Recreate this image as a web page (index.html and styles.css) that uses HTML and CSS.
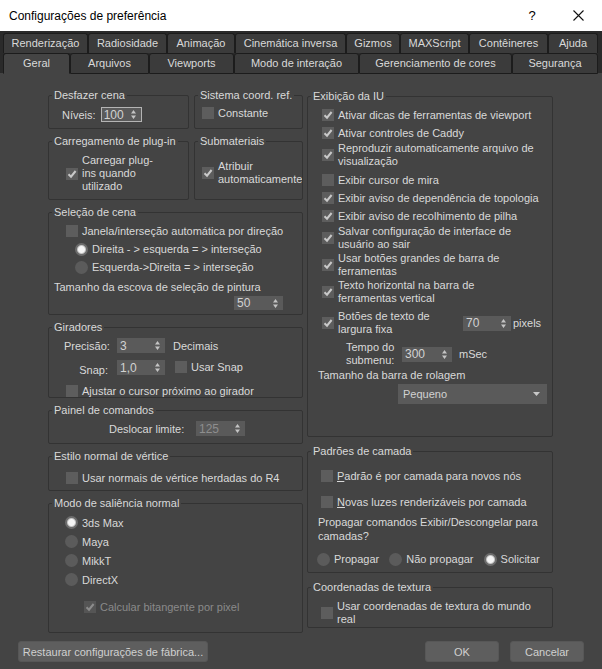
FILE: index.html
```html
<!DOCTYPE html>
<html lang="pt-BR">

<head>
    <meta charset="UTF-8">
    <meta name="viewport" content="width=device-width, initial-scale=1.0">
    <title>Configurações de preferência</title>

    <link rel="stylesheet" href="styles.css">
</head>

<body>
    <div class="dialog">
        <header class="titlebar">
            <span class="title">Configurações de preferência</span>
            <span class="title-help">?</span>
            <span class="title-close">
                <svg width="11" height="11" viewBox="0 0 11 11">
                    <path d="M0.5 0.5 L10.5 10.5 M10.5 0.5 L0.5 10.5" stroke="#111" stroke-width="1.1" fill="none" />
                </svg>
            </span>
        </header>

        <nav class="tabs">
            <div class="tab-row tab-row-back">
                <span class="tab">Renderização</span>
                <span class="tab">Radiosidade</span>
                <span class="tab">Animação</span>
                <span class="tab">Cinemática inversa</span>
                <span class="tab">Gizmos</span>
                <span class="tab">MAXScript</span>
                <span class="tab">Contêineres</span>
                <span class="tab">Ajuda</span>
            </div>
            <div class="tab-row tab-row-front">
                <span class="tab active">Geral</span>
                <span class="tab">Arquivos</span>
                <span class="tab">Viewports</span>
                <span class="tab">Modo de interação</span>
                <span class="tab">Gerenciamento de cores</span>
                <span class="tab">Segurança</span>
            </div>
        </nav>

        <main class="pane">
            <div class="col col-left">
                <div class="pair">
                    <fieldset class="group g-undo">
                        <legend>Desfazer cena</legend>
                        <div class="gbody">
                            <div class="row">
                                <span>Níveis:</span>
                                <span class="spin spin-focus w41">100
                                    <svg class="arrows" width="5" height="9" viewBox="0 0 5 9"><path d="M2.5 0 L5 3.5 H0Z M0 5.5 H5 L2.5 9Z" /></svg>
                                </span>
                            </div>
                        </div>
                    </fieldset>
                    <fieldset class="group g-ref">
                        <legend>Sistema coord. ref.</legend>
                        <div class="gbody">
                            <div class="row">
                                <span class="check"></span>
                                <span>Constante</span>
                            </div>
                        </div>
                    </fieldset>
                </div>

                <div class="pair">
                    <fieldset class="group g-plugin">
                        <legend>Carregamento de plug-in</legend>
                        <div class="gbody">
                            <div class="row">
                                <span class="check on"><svg viewBox="0 0 12 12"><path d="M2.5 6.2 L5 8.7 L9.6 3" /></svg></span>
                                <span class="wrap">Carregar plug-<br>ins quando<br>utilizado</span>
                            </div>
                        </div>
                    </fieldset>
                    <fieldset class="group g-sub">
                        <legend>Submateriais</legend>
                        <div class="gbody">
                            <div class="row">
                                <span class="check on"><svg viewBox="0 0 12 12"><path d="M2.5 6.2 L5 8.7 L9.6 3" /></svg></span>
                                <span class="wrap">Atribuir<br>automaticamente</span>
                            </div>
                        </div>
                    </fieldset>
                </div>

                <fieldset class="group g-sel">
                    <legend>Seleção de cena</legend>
                    <div class="gbody">
                        <div class="row r18 ml12">
                            <span class="check"></span>
                            <span>Janela/interseção automática por direção</span>
                        </div>
                        <div class="row r18 ml21">
                            <span class="radio on"></span>
                            <span>Direita - &gt; esquerda = &gt; interseção</span>
                        </div>
                        <div class="row r18 ml21">
                            <span class="radio"></span>
                            <span>Esquerda-&gt;Direita = &gt; interseção</span>
                        </div>
                        <div class="row r14 mt4">Tamanho da escova de seleção de pintura</div>
                        <div class="row brush-row">
                            <span class="spin w49 h14">50
                                <svg class="arrows" width="5" height="9" viewBox="0 0 5 9"><path d="M2.5 0 L5 3.5 H0Z M0 5.5 H5 L2.5 9Z" /></svg>
                            </span>
                        </div>
                    </div>
                </fieldset>

                <fieldset class="group g-spin">
                    <legend>Giradores</legend>
                    <div class="gbody">
                        <div class="row">
                            <span class="lbl-right">Precisão:</span>
                            <span class="spin w48">3
                                <svg class="arrows" width="5" height="9" viewBox="0 0 5 9"><path d="M2.5 0 L5 3.5 H0Z M0 5.5 H5 L2.5 9Z" /></svg>
                            </span>
                            <span class="after-spin">Decimais</span>
                        </div>
                        <div class="row snap-row">
                            <span class="lbl-right snap-lbl">Snap:</span>
                            <span class="spin w48">1,0
                                <svg class="arrows" width="5" height="9" viewBox="0 0 5 9"><path d="M2.5 0 L5 3.5 H0Z M0 5.5 H5 L2.5 9Z" /></svg>
                            </span>
                            <span class="check snap-check"></span>
                            <span class="snap-text">Usar Snap</span>
                        </div>
                        <div class="row r14 snap-cursor">
                            <span class="check"></span>
                            <span>Ajustar o cursor próximo ao girador</span>
                        </div>
                    </div>
                </fieldset>

                <fieldset class="group g-cmd">
                    <legend>Painel de comandos</legend>
                    <div class="gbody">
                        <div class="row">
                            <span class="lbl-scroll">Deslocar limite:</span>
                            <span class="spin w49 muted">125
                                <svg class="arrows" width="5" height="9" viewBox="0 0 5 9"><path d="M2.5 0 L5 3.5 H0Z M0 5.5 H5 L2.5 9Z" /></svg>
                            </span>
                        </div>
                    </div>
                </fieldset>

                <fieldset class="group g-vert">
                    <legend>Estilo normal de vértice</legend>
                    <div class="gbody">
                        <div class="row r14">
                            <span class="check"></span>
                            <span>Usar normais de vértice herdadas do R4</span>
                        </div>
                    </div>
                </fieldset>

                <fieldset class="group g-bump">
                    <legend>Modo de saliência normal</legend>
                    <div class="gbody">
                        <div class="row r19"><span class="radio on"></span><span>3ds Max</span></div>
                        <div class="row r19"><span class="radio"></span><span>Maya</span></div>
                        <div class="row r19"><span class="radio"></span><span>MikkT</span></div>
                        <div class="row r19"><span class="radio"></span><span>DirectX</span></div>
                        <div class="row r14 bitangent disabled">
                            <span class="check on"><svg viewBox="0 0 12 12"><path d="M2.5 6.2 L5 8.7 L9.6 3" /></svg></span>
                            <span>Calcular bitangente por pixel</span>
                        </div>
                    </div>
                </fieldset>
            </div>

            <div class="col col-right">
                <fieldset class="group g-ui">
                    <legend>Exibição da IU</legend>
                    <div class="gbody">
                        <div class="row r18">
                            <span class="check on"><svg viewBox="0 0 12 12"><path d="M2.5 6.2 L5 8.7 L9.6 3" /></svg></span>
                            <span>Ativar dicas de ferramentas de viewport</span>
                        </div>
                        <div class="row r18">
                            <span class="check on"><svg viewBox="0 0 12 12"><path d="M2.5 6.2 L5 8.7 L9.6 3" /></svg></span>
                            <span>Ativar controles de Caddy</span>
                        </div>
                        <div class="row">
                            <span class="check on"><svg viewBox="0 0 12 12"><path d="M2.5 6.2 L5 8.7 L9.6 3" /></svg></span>
                            <span class="wrap">Reproduzir automaticamente arquivo de<br>visualização</span>
                        </div>
                        <div class="row r18 mt3">
                            <span class="check"></span>
                            <span>Exibir cursor de mira</span>
                        </div>
                        <div class="row r18">
                            <span class="check on"><svg viewBox="0 0 12 12"><path d="M2.5 6.2 L5 8.7 L9.6 3" /></svg></span>
                            <span>Exibir aviso de dependência de topologia</span>
                        </div>
                        <div class="row r18">
                            <span class="check on"><svg viewBox="0 0 12 12"><path d="M2.5 6.2 L5 8.7 L9.6 3" /></svg></span>
                            <span>Exibir aviso de recolhimento de pilha</span>
                        </div>
                        <div class="row">
                            <span class="check on"><svg viewBox="0 0 12 12"><path d="M2.5 6.2 L5 8.7 L9.6 3" /></svg></span>
                            <span class="wrap">Salvar configuração de interface de<br>usuário ao sair</span>
                        </div>
                        <div class="row mt1">
                            <span class="check on"><svg viewBox="0 0 12 12"><path d="M2.5 6.2 L5 8.7 L9.6 3" /></svg></span>
                            <span class="wrap">Usar botões grandes de barra de<br>ferramentas</span>
                        </div>
                        <div class="row mt1">
                            <span class="check on"><svg viewBox="0 0 12 12"><path d="M2.5 6.2 L5 8.7 L9.6 3" /></svg></span>
                            <span class="wrap">Texto horizontal na barra de<br>ferramentas vertical</span>
                        </div>
                        <div class="row fixed-row">
                            <span class="check on"><svg viewBox="0 0 12 12"><path d="M2.5 6.2 L5 8.7 L9.6 3" /></svg></span>
                            <span class="wrap w-fixed">Botões de texto de<br>largura fixa</span>
                            <span class="spin w48">70
                                <svg class="arrows" width="5" height="9" viewBox="0 0 5 9"><path d="M2.5 0 L5 3.5 H0Z M0 5.5 H5 L2.5 9Z" /></svg>
                            </span>
                            <span class="unit">pixels</span>
                        </div>
                        <div class="row submenu-row">
                            <span class="wrap lbl-submenu">Tempo do<br>submenu:</span>
                            <span class="spin w50">300
                                <svg class="arrows" width="5" height="9" viewBox="0 0 5 9"><path d="M2.5 0 L5 3.5 H0Z M0 5.5 H5 L2.5 9Z" /></svg>
                            </span>
                            <span class="unit-ms">mSec</span>
                        </div>
                        <div class="row r14 scroll-lbl">Tamanho da barra de rolagem</div>
                        <div class="combo">
                            <span>Pequeno</span>
                            <svg width="7" height="4" viewBox="0 0 7 4"><path d="M0 0 H7 L3.5 4Z" fill="#c8c8c8" /></svg>
                        </div>
                    </div>
                </fieldset>

                <fieldset class="group g-layer">
                    <legend>Padrões de camada</legend>
                    <div class="gbody">
                        <div class="row r14 layer-opt">
                            <span class="check"></span>
                            <span><u>P</u>adrão é por camada para novos nós</span>
                        </div>
                        <div class="row r14 layer-opt layer-opt2">
                            <span class="check"></span>
                            <span><u>N</u>ovas luzes renderizáveis por camada</span>
                        </div>
                        <p class="question">Propagar comandos Exibir/Descongelar para camadas?</p>
                        <div class="row r14 choices">
                            <span class="radio"></span><span>Propagar</span>
                            <span class="radio"></span><span>Não propagar</span>
                            <span class="radio on"></span><span>Solicitar</span>
                        </div>
                    </div>
                </fieldset>

                <fieldset class="group g-tex">
                    <legend>Coordenadas de textura</legend>
                    <div class="gbody">
                        <div class="row">
                            <span class="check"></span>
                            <span class="wrap">Usar coordenadas de textura do mundo<br>real</span>
                        </div>
                    </div>
                </fieldset>
            </div>
        </main>

        <footer class="buttons">
            <button class="btn btn-restore">Restaurar configurações de fábrica...</button>
            <button class="btn btn-ok">OK</button>
            <button class="btn">Cancelar</button>
        </footer>
    </div>
</body>

</html>
```

FILE: styles.css
```css
body {
    margin: 0;
    background: #444;
}

.dialog {
    display: flex;
    flex-direction: column;
    width: 602px;
    height: 669px;
    background: #444;
    color: #d9d9d9;
    font-family: "Liberation Sans", Arial, sans-serif;
    font-size: 11px;
    overflow: hidden;
}

/* title bar */

.titlebar {
    display: flex;
    align-items: center;
    height: 31px;
    padding-left: 9px;
    background: #fff;
    color: #000;
    font-size: 12px;
}

.title {
    flex: 1;
}

.title-help {
    width: 14px;
    margin-right: 34px;
    font-size: 13px;
    text-align: center;
}

.title-close {
    display: flex;
    margin-right: 18px;
}

/* tabs */

.tabs {
    padding-top: 2px;
    background: #2a2a2a;
}

.tab-row {
    display: grid;
    height: 20px;
    padding-left: 3px;
}

.tab-row-back {
    grid-template-columns: 85px 79px 68px 111px 54px 69px 79px 50px;
}

.tab-row-front {
    grid-template-columns: 67px 79px 85px 125px 153px 86px;
}

.tab {
    border: 1px solid #1c1c1c;
    border-bottom: none;
    border-radius: 3px 3px 0 0;
    background: #3b3b3b;
    line-height: 19px;
    text-align: center;
    white-space: nowrap;
}

.tab-row-front .tab {
    border-bottom: 1px solid #1c1c1c;
}

.tab-row-front .tab.active {
    border-bottom-color: #444;
    background: #444;
}

/* pane with the two columns of groups */

.pane {
    display: flex;
    gap: 4px;
    height: 567px;
    padding: 15px 0 0 48px;
    box-sizing: border-box;
}

.col {
    display: flex;
    flex-direction: column;
    gap: 5px;
}

.col-left {
    width: 255px;
}

.col-right {
    width: 246px;
    margin-top: 1px;
    gap: 7px;
}

.pair {
    display: flex;
    gap: 5px;
}

.group {
    margin: 0;
    padding: 0;
    min-width: 0;
    box-sizing: border-box;
    border: 1px solid #333;
    border-radius: 2px;
}

.group legend {
    margin-left: 3px;
    padding: 0 2px;
    line-height: 14px;
}

.row {
    display: flex;
    align-items: center;
    gap: 4px;
    white-space: nowrap;
}

.wrap {
    line-height: 13px;
}

.r14 { height: 14px; }
.r18 { height: 18px; }
.r19 { height: 19px; }
.mt1 { margin-top: 1px; }
.mt3 { margin-top: 3px; }
.mt4 { margin-top: 4px; }
.ml12 { margin-left: 12px; }
.ml21 { margin-left: 21px; }

/* controls */

.check {
    display: inline-flex;
    flex: none;
    width: 12px;
    height: 12px;
    background: #5d5d5d;
}

.check svg {
    width: 12px;
    height: 12px;
}

.check path {
    fill: none;
    stroke: #c9c9c9;
    stroke-width: 2;
}

.radio {
    flex: none;
    width: 13px;
    height: 13px;
    border-radius: 50%;
    background: #5b5b5b;
}

.radio.on {
    background: radial-gradient(circle, #f4f4f4 0 3px, #c4c4c4 4px, #6c6c6c 5px);
}

.spin {
    display: flex;
    flex: none;
    align-items: center;
    justify-content: space-between;
    height: 15px;
    padding: 0 5px 0 3px;
    box-sizing: border-box;
    background: #5a5a5a;
    color: #d2d2d2;
    font-size: 12px;
}

.spin .arrows {
    fill: #c4c4c4;
}

.spin-focus {
    border: 1px solid #b4b4b4;
    padding-left: 2px;
}

.spin.muted {
    color: #8e8e8e;
}

.w41 { width: 41px; }
.w48 { width: 48px; }
.w49 { width: 49px; }
.w50 { width: 50px; }
.h14 { height: 14px; }

.combo {
    display: flex;
    align-items: center;
    justify-content: space-between;
    width: 149px;
    height: 20px;
    margin: 2px 0 0 76px;
    padding: 0 7px 0 5px;
    box-sizing: border-box;
    background: #5a5a5a;
    color: #d2d2d2;
}

.disabled {
    color: #8a8a8a;
}

.disabled .check {
    background: #555;
}

.disabled .check path {
    stroke: #8c8c8c;
}

/* left column groups */

.g-undo {
    width: 141px;
    height: 41px;
}

.g-undo .gbody {
    padding: 5px 0 0 13px;
}

.g-undo .row {
    gap: 5px;
}

.g-ref {
    width: 109px;
    height: 41px;
}

.g-ref .gbody {
    padding: 5px 0 0 7px;
}

.g-plugin {
    width: 141px;
    height: 66px;
}

.g-plugin .gbody {
    padding: 6px 0 0 17px;
}

.g-sub {
    width: 109px;
    height: 66px;
    overflow: hidden;
}

.g-sub .gbody {
    padding: 12px 0 0 7px;
}

.g-sel {
    height: 110px;
}

.g-sel .gbody {
    padding: 3px 0 0 5px;
}

.brush-row {
    justify-content: flex-end;
    margin: 2px 19px 0 0;
}

.g-spin {
    height: 78px;
}

.g-spin .gbody {
    padding: 4px 0 0 15px;
}

.lbl-right {
    width: 44px;
    margin-right: 5px;
    text-align: right;
}

.after-spin {
    margin-left: 4px;
}

.snap-row {
    margin-top: 7px;
    align-items: flex-start;
}

.snap-lbl {
    padding-top: 4px;
}

.snap-check {
    margin: 1px 0 0 6px;
}

.snap-text {
    padding-top: 1px;
}

.snap-cursor {
    margin: 8px 0 0 2px;
}

.g-cmd {
    height: 41px;
}

.g-cmd .gbody {
    padding: 4px 0 0 60px;
}

.lbl-scroll {
    width: 83px;
}

.g-vert {
    height: 42px;
}

.g-vert .gbody {
    padding: 8px 0 0 17px;
}

.g-bump {
    height: 137px;
}

.g-bump .gbody {
    padding: 3px 0 0 16px;
}

.bitangent {
    margin: 11px 0 0 19px;
}

/* right column groups */

.g-ui {
    height: 348px;
}

.g-ui .gbody {
    padding: 3px 0 0 14px;
}

.fixed-row {
    margin-top: 5px;
}

.w-fixed {
    width: 121px;
}

.unit {
    margin-left: -2px;
}

.submenu-row {
    margin: 5px 0 0 24px;
    gap: 8px;
}

.lbl-submenu {
    width: 48px;
    text-align: right;
}

.unit-ms {
    margin-left: -1px;
}

.scroll-lbl {
    margin: 1px 0 0 -4px;
}

.g-layer {
    height: 129px;
}

.g-layer .gbody {
    padding: 11px 0 0 10px;
}

.layer-opt {
    margin-left: 3px;
}

.layer-opt2 {
    margin-top: 12px;
}

.question {
    margin: 6px 0 0;
    padding-right: 8px;
    line-height: 14px;
}

.choices {
    margin: 9px 0 0 -1px;
}

.choices .radio + span {
    margin-right: 6px;
}

.g-tex {
    height: 48px;
}

.g-tex .gbody {
    padding: 6px 0 0 13px;
}

/* bottom buttons */

.buttons {
    display: flex;
    gap: 11px;
    padding: 0 18px 0 18px;
    margin-top: 1px;
}

.btn {
    width: 74px;
    height: 21px;
    padding: 0;
    border: 1px solid #575757;
    border-radius: 3px;
    background: #5e5e5e;
    color: #d0d0d0;
    font: 11px "Liberation Sans", Arial, sans-serif;
    white-space: nowrap;
}

.btn-restore {
    width: 190px;
    margin-right: auto;
}
```
